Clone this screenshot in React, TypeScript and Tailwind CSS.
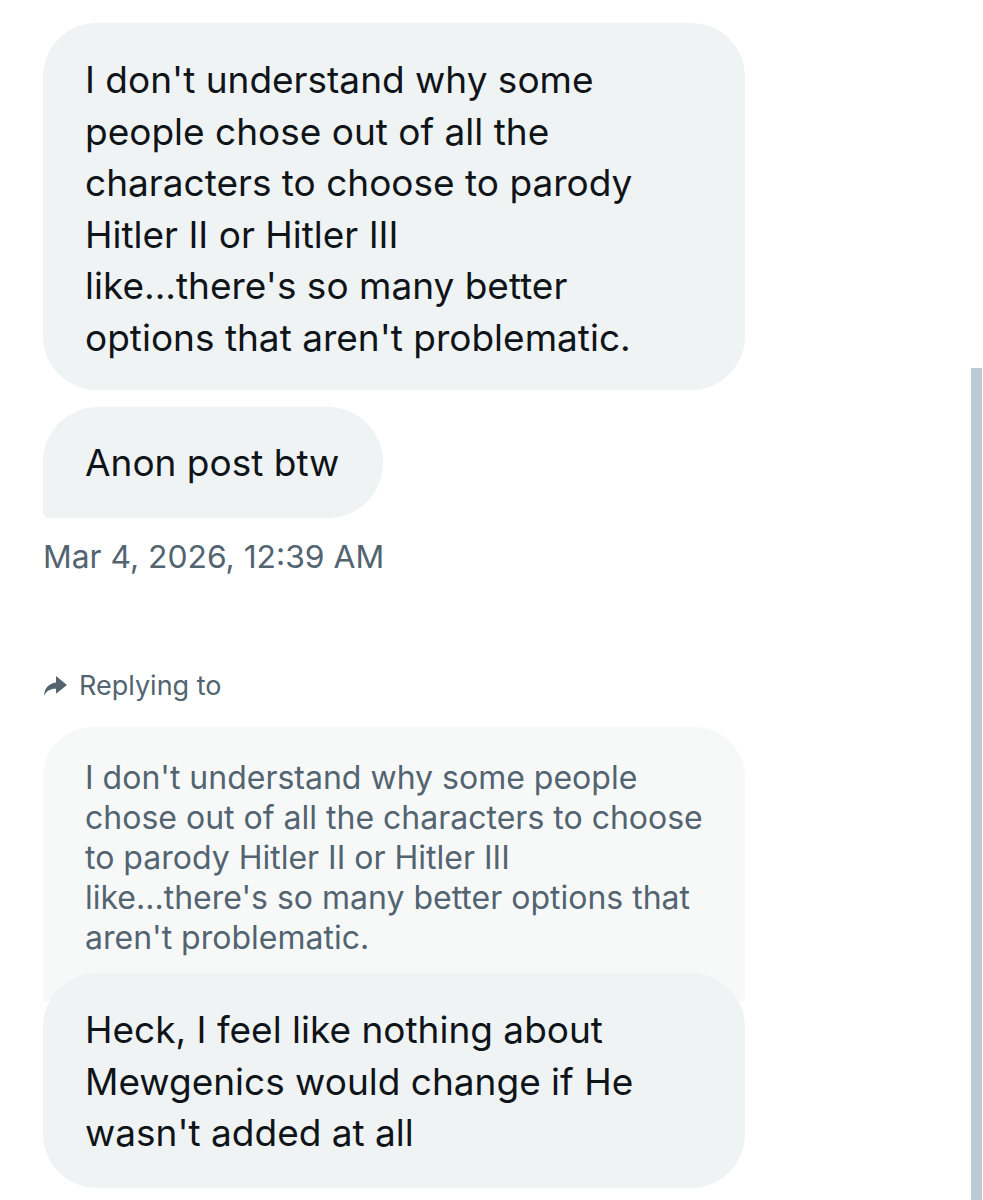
import React from 'react';

const font = { fontFamily: 'Inter, "Noto Sans", sans-serif' };

function ReplyArrow() {
  return (
    <svg viewBox="0 0 24 24" className="w-[25px] h-[25px] fill-[#536471]">
      <path d="M12.5 2L23 10.5l-10.5 8.5v-4.8c-5.6-.1-9.4 2.1-11.5 6.8.3-7.2 4.4-11.9 11.5-12.8V2z" />
    </svg>
  );
}

export default function App() {
  return (
    <div className="relative w-[983px] h-[1200px] bg-white overflow-hidden" style={font}>
      <div className="pl-[43px] pt-[23px] w-[745px]">
        <div className="w-[702px] bg-[#eff3f4] rounded-[54px] pl-[42px] pt-[31px] pb-[27px] text-[37px] leading-[51.5px] text-[#0f1419] whitespace-nowrap">
          I don't understand why some
          <br />
          people chose out of all the
          <br />
          characters to choose to parody
          <br />
          Hitler II or Hitler III
          <br />
          like...there's so many better
          <br />
          options that aren't problematic.
        </div>

        <div className="mt-[17px] w-[340px] h-[111px] flex items-center bg-[#eff3f4] rounded-[55px] rounded-bl-[6px] pl-[42px] text-[37px] text-[#0f1419] whitespace-nowrap">
          Anon post btw
        </div>

        <div className="mt-[21px] text-[31.8px] leading-[36px] text-[#536471] whitespace-nowrap">
          Mar 4, 2026, 12:39 AM
        </div>

        <div className="mt-[95px] flex items-center gap-[11px] text-[27px] leading-[32px] text-[#536471]">
          <ReplyArrow />
          <span>Replying to</span>
        </div>

        <div className="mt-[25px] w-[702px] bg-[#f7f9f9] rounded-t-[50px] pl-[42px] pt-[31px] pb-[43px] text-[32px] leading-[40px] text-[#536471] whitespace-nowrap">
          I don't understand why some people
          <br />
          chose out of all the characters to choose
          <br />
          to parody Hitler II or Hitler III
          <br />
          like...there's so many better options that
          <br />
          aren't problematic.
        </div>

        <div className="relative -mt-[28px] w-[702px] bg-[#eff3f4] rounded-[54px] pl-[42px] pt-[31px] pb-[29px] text-[37px] leading-[51.5px] text-[#0f1419] whitespace-nowrap">
          Heck, I feel like nothing about
          <br />
          Mewgenics would change if He
          <br />
          wasn't added at all
        </div>
      </div>

      <div className="absolute right-[1px] top-[368px] w-[11px] h-[832px] bg-[#bccbd3]" />
    </div>
  );
}
